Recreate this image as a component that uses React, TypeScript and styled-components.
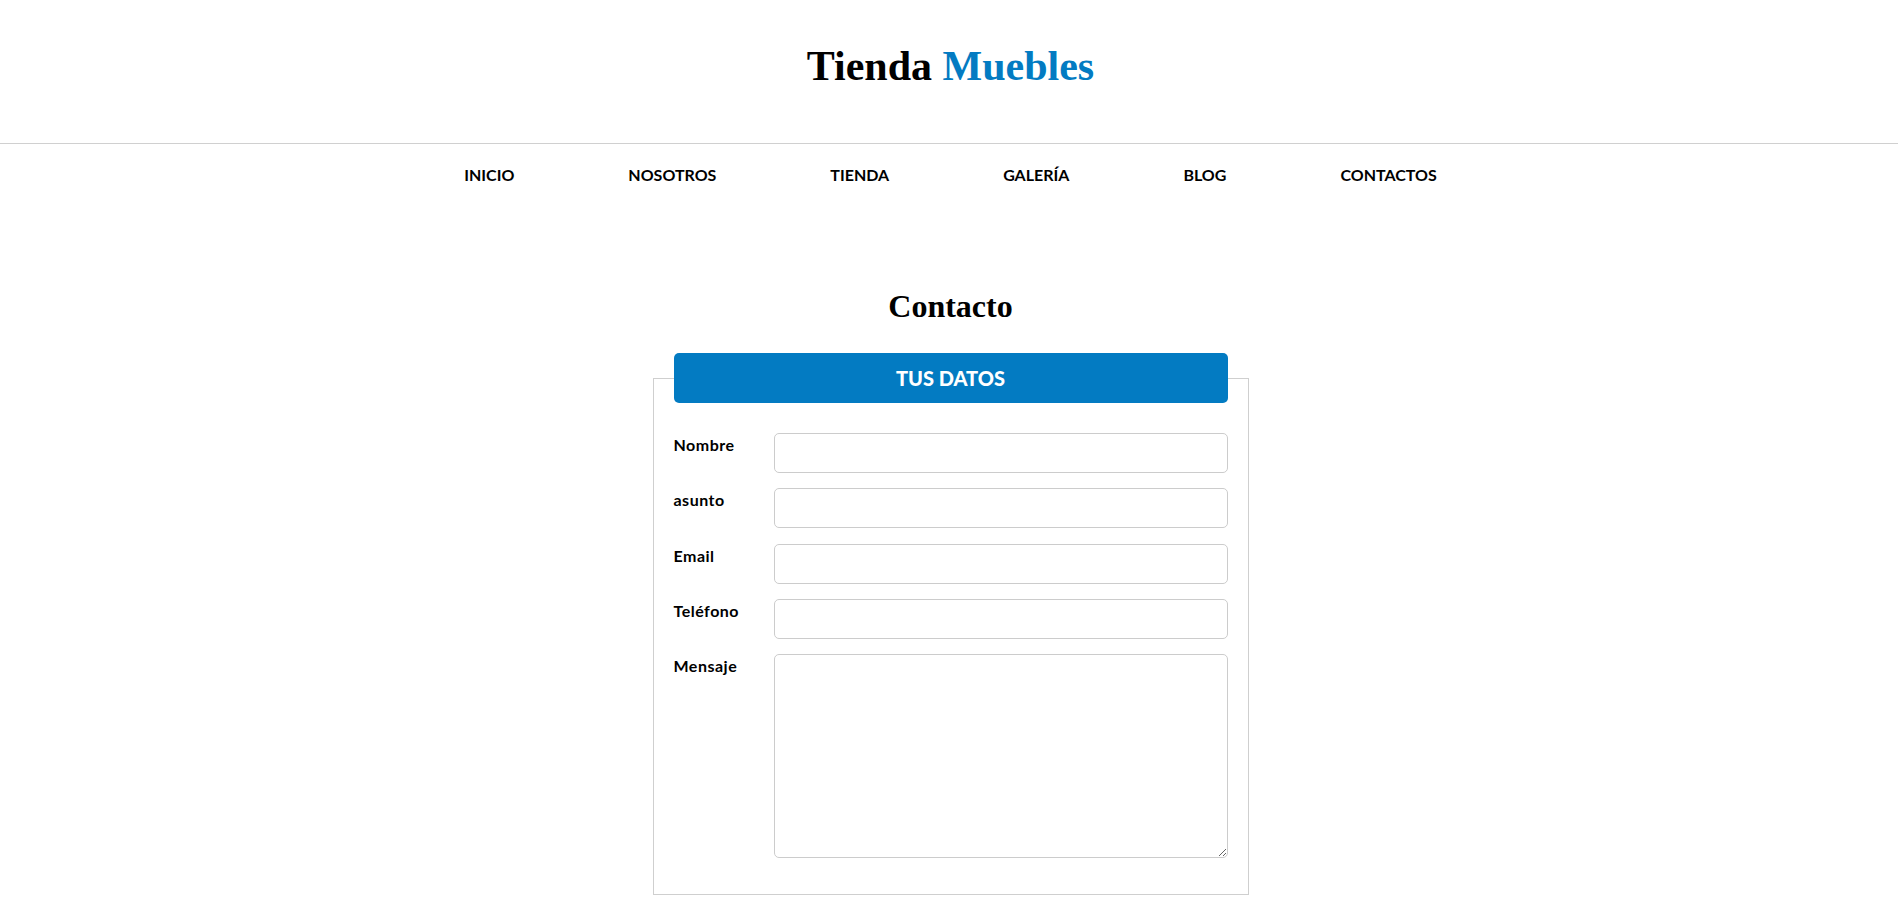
import React from "react";
import styled, { createGlobalStyle } from "styled-components";

const GlobalStyle = createGlobalStyle`
  html, body {
    margin: 0;
    padding: 0;
    background: #ffffff;
    color: #000000;
    font-family: "Lato", "Open Sans", sans-serif;
  }
  * { box-sizing: border-box; }
`;

const BLUE = "#037bc2";

const Header = styled.header`
  padding: 45px 0 56px 3px;
  border-bottom: 1px solid #d0d0d0;
  text-align: center;
`;

const Logo = styled.h1`
  margin: 0;
  font-family: "Liberation Serif", "Times New Roman", serif;
  font-size: 42px;
  line-height: 42px;
  font-weight: 700;
  color: #000;
`;

const LogoAccent = styled.span`
  color: ${BLUE};
`;

const Nav = styled.nav`
  display: flex;
  justify-content: center;
  gap: 114px;
  padding: 19px 0 19px 3px;
`;

const NavLink = styled.a`
  font-family: "Lato", sans-serif;
  font-size: 16px;
  line-height: 24px;
  font-weight: 700;
  color: #000;
  text-decoration: none;
  text-transform: uppercase;
`;

const Main = styled.main`
  padding: 84px 0 0 3px;
  display: flex;
  flex-direction: column;
  align-items: center;
`;

const Title = styled.h2`
  margin: 0;
  font-family: "Liberation Serif", "Times New Roman", serif;
  font-size: 32px;
  line-height: 32px;
  font-weight: 700;
`;

const Form = styled.form`
  width: 596px;
  margin-top: 31px;
`;

const Fieldset = styled.fieldset`
  margin: 0;
  padding: 30px 20px 20px;
  border: 1px solid #cfcfcf;
  min-width: 0;
`;

const Legend = styled.legend`
  width: 100%;
  padding: 0;
  height: 50px;
  line-height: 50px;
  background: ${BLUE};
  color: #fff;
  border-radius: 5px;
  text-align: center;
  text-transform: uppercase;
  font-family: "Lato", sans-serif;
  font-weight: 900;
  font-size: 20px;
`;

const Row = styled.div`
  display: flex;
  align-items: flex-start;
  margin-bottom: 15.33px;
`;

const Label = styled.label`
  flex: 0 0 100px;
  font-family: "Lato", sans-serif;
  font-weight: 700;
  font-size: 16px;
  letter-spacing: 0.5px;
  line-height: 24px;
  color: #000;
`;

const fieldCss = `
  flex: 1;
  display: block;
  margin: 0;
  border: 1px solid #cccccc;
  border-radius: 5px;
  background: #fff;
  font-family: "Lato", sans-serif;
  font-size: 16px;
  padding: 8px 10px;
  outline: none;
`;

const Input = styled.input`
  ${fieldCss}
  height: 40px;
`;

const TextArea = styled.textarea`
  ${fieldCss}
  height: 204px;
  resize: both;
`;

const navItems = ["Inicio", "Nosotros", "Tienda", "Galería", "Blog", "Contactos"];

const fields = [
  { id: "nombre", label: "Nombre", type: "text" },
  { id: "asunto", label: "asunto", type: "text" },
  { id: "email", label: "Email", type: "email" },
  { id: "telefono", label: "Teléfono", type: "tel" },
];

export default function App() {
  return (
    <>
      <GlobalStyle />
      <Header>
        <Logo>
          Tienda <LogoAccent>Muebles</LogoAccent>
        </Logo>
      </Header>
      <Nav>
        {navItems.map((item) => (
          <NavLink key={item} href="#">
            {item}
          </NavLink>
        ))}
      </Nav>
      <Main>
        <Title>Contacto</Title>
        <Form onSubmit={(e) => e.preventDefault()}>
          <Fieldset>
            <Legend>Tus datos</Legend>
            {fields.map((f) => (
              <Row key={f.id}>
                <Label htmlFor={f.id}>{f.label}</Label>
                <Input id={f.id} type={f.type} />
              </Row>
            ))}
            <Row>
              <Label htmlFor="mensaje">Mensaje</Label>
              <TextArea id="mensaje" />
            </Row>
          </Fieldset>
        </Form>
      </Main>
    </>
  );
}
